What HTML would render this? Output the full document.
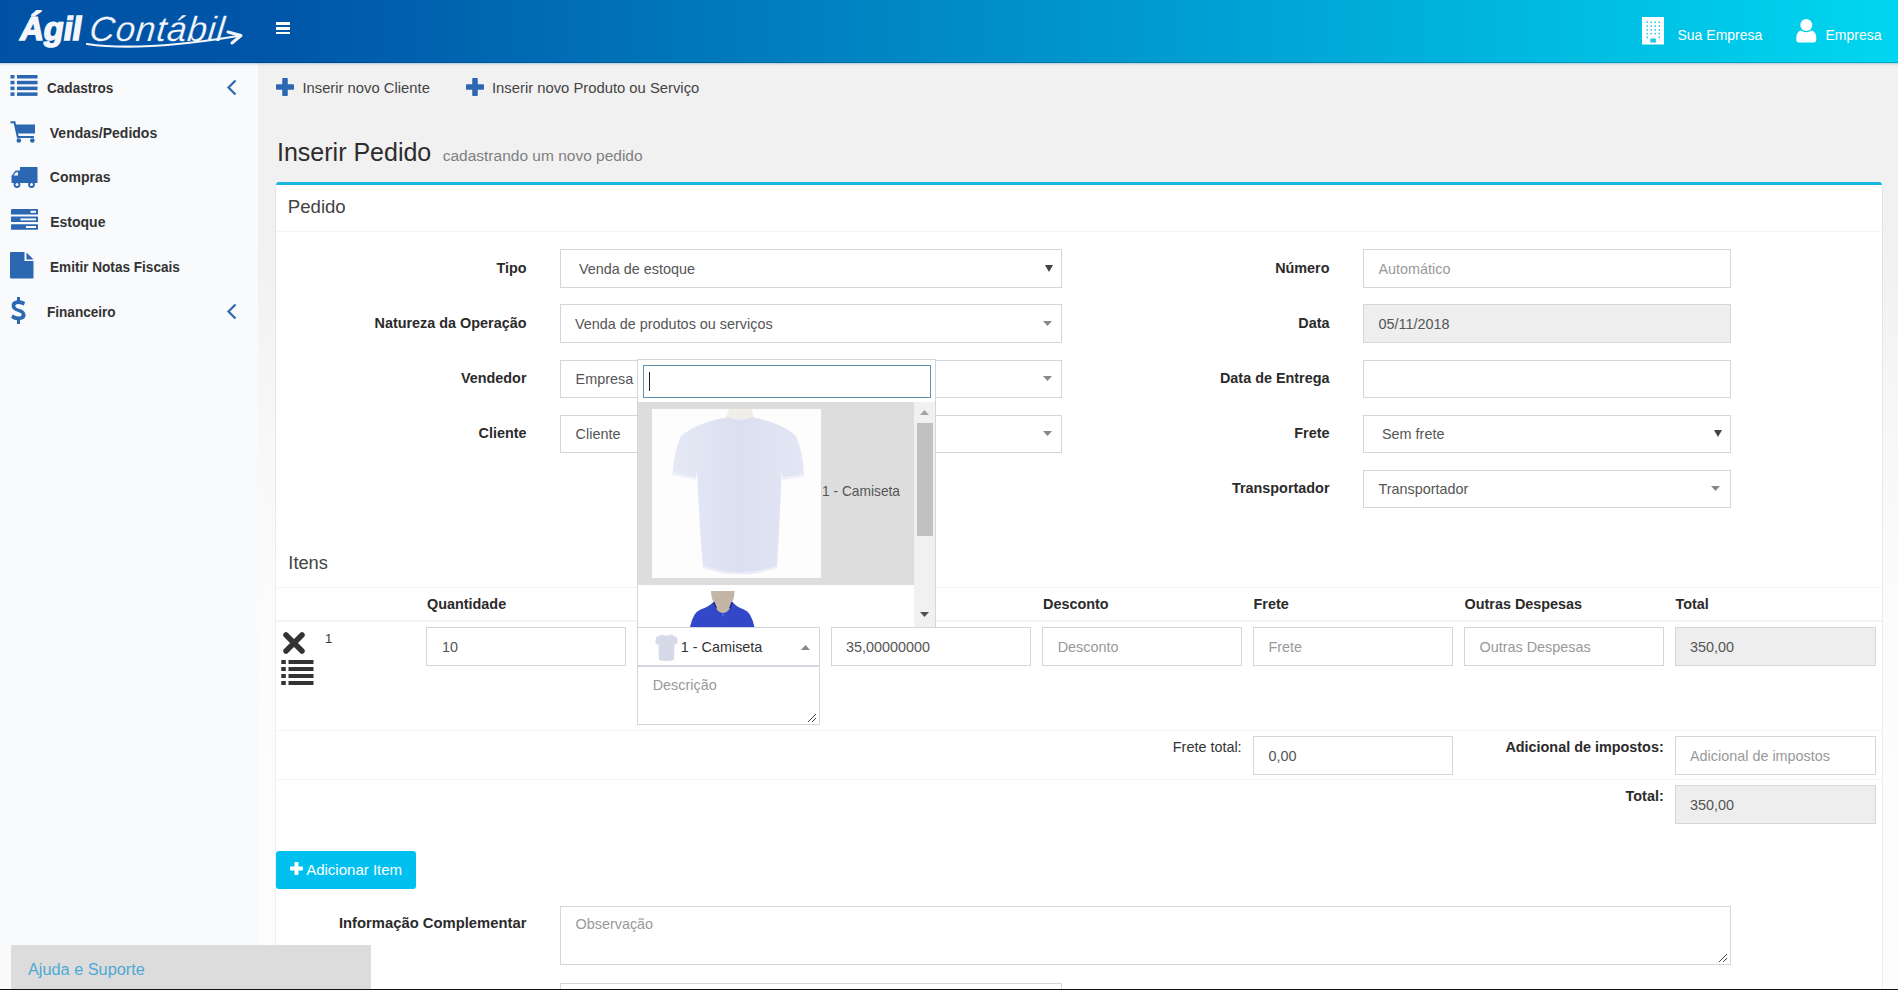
<!DOCTYPE html>
<html><head><meta charset="utf-8"><title>Inserir Pedido</title>
<style>
html,body{margin:0;padding:0;}
body{width:1898px;height:990px;overflow:hidden;position:relative;font-family:"Liberation Sans",sans-serif;background:#f1f1f1;}
.t{position:absolute;white-space:nowrap;line-height:1;}
.r{position:absolute;}
</style></head><body>
<div class="r" style="left:0px;top:0px;width:1898px;height:990px;background:linear-gradient(180deg,#f1f1f1 0px,#f1f1f1 240px,#f8f8f8 450px,#fcfcfc 650px,#fdfdfd 990px);"></div>
<div class="r" style="left:0px;top:62px;width:258px;height:928px;background:#f9fafc;"></div>
<div class="r" style="left:0px;top:0px;width:1898px;height:63px;background:linear-gradient(90deg,#0052a5 0%,#0055a8 14%,#00d6f0 100%);box-shadow:0 1px 3px rgba(0,0,0,.18);"></div>
<div class="r" style="left:0px;top:62px;width:1898px;height:1px;background:rgba(0,20,50,.22);"></div>
<div class="r" style="left:0px;top:63px;width:1898px;height:1px;background:rgba(170,215,240,.55);"></div>
<div class="t" style="top:15.40px;font-size:30px;color:#f4f6fb;font-weight:bold;left:17.5px;letter-spacing:-0.3px;-webkit-text-stroke:1.4px #f4f6fb;transform:skewX(-9deg) scale(1.1,1.1);transform-origin:left bottom;">&Aacute;gil</div>
<div class="t" style="top:10.86px;font-size:35px;color:#f4f6fb;left:88px;font-style:italic;letter-spacing:0.9px;transform:skewX(-6deg);transform-origin:left bottom;-webkit-text-stroke:0.2px #0052a5;">Cont&aacute;bil</div>
<svg class="r" style="left:80px;top:28px" width="170" height="22" viewBox="0 0 170 22">
<path d="M7 16 Q 60 24 158 8" stroke="#f4f6fb" stroke-width="2.2" fill="none" stroke-linecap="round"/>
<path d="M148 4 L161 7.5 L152 15" stroke="#f4f6fb" stroke-width="3" fill="none" stroke-linecap="round" stroke-linejoin="round"/>
</svg>
<div class="r" style="left:276px;top:22px;width:14px;height:3px;background:#fff;"></div>
<div class="r" style="left:276px;top:27px;width:14px;height:2.8000000000000007px;background:#fff;"></div>
<div class="r" style="left:276px;top:31.6px;width:14px;height:2.6000000000000014px;background:#fff;"></div>
<svg class="r" style="left:1642px;top:16.5px" width="22" height="28" viewBox="0 0 22 28">
<rect x="0" y="0" width="22" height="27.5" fill="#fff"/>
<g fill="#1ec6e8"><rect x="4.5" y="4.5" width="1.5" height="1.5"/><rect x="8.5" y="4.5" width="1.5" height="1.5"/><rect x="12.5" y="4.5" width="1.5" height="1.5"/><rect x="16.5" y="4.5" width="1.5" height="1.5"/><rect x="4.5" y="8.3" width="1.5" height="1.5"/><rect x="8.5" y="8.3" width="1.5" height="1.5"/><rect x="12.5" y="8.3" width="1.5" height="1.5"/><rect x="16.5" y="8.3" width="1.5" height="1.5"/><rect x="4.5" y="12.1" width="1.5" height="1.5"/><rect x="8.5" y="12.1" width="1.5" height="1.5"/><rect x="12.5" y="12.1" width="1.5" height="1.5"/><rect x="16.5" y="12.1" width="1.5" height="1.5"/><rect x="4.5" y="15.9" width="1.5" height="1.5"/><rect x="8.5" y="15.9" width="1.5" height="1.5"/><rect x="12.5" y="15.9" width="1.5" height="1.5"/><rect x="16.5" y="15.9" width="1.5" height="1.5"/><rect x="4.5" y="19.7" width="1.5" height="1.5"/><rect x="16.5" y="19.7" width="1.5" height="1.5"/><rect x="8.3" y="21.5" width="5.6" height="4"/></g></svg>
<div class="t" style="top:28.14px;font-size:14px;color:#fff;left:1677.5px;">Sua Empresa</div>
<svg class="r" style="left:1796px;top:18.5px" width="21" height="24" viewBox="0 0 21 24">
<circle cx="10.3" cy="6" r="6" fill="#fff"/>
<path d="M4.5 11.5 Q10.3 14.8 16 11.5 Q20.5 13.5 20.3 19 V20.5 Q20.3 23.5 17.5 23.5 H3 Q0.3 23.5 0.3 20.5 V19 Q0.1 13.5 4.5 11.5 Z" fill="#fff"/>
</svg>
<div class="t" style="top:28.14px;font-size:14px;color:#fff;left:1825.5px;">Empresa</div>
<svg class="r" style="left:10px;top:75px" width="28" height="21" viewBox="0 0 28 21">
<g fill="#2c67b1">
<rect x="0.5" y="0" width="4" height="3.5"/><rect x="7" y="0" width="20.5" height="3.5"/>
<rect x="0.5" y="5.8" width="4" height="3.5"/><rect x="7" y="5.8" width="20.5" height="3.5"/>
<rect x="0.5" y="11.6" width="4" height="3.5"/><rect x="7" y="11.6" width="20.5" height="3.5"/>
<rect x="0.5" y="17.4" width="4" height="3.5"/><rect x="7" y="17.4" width="20.5" height="3.5"/>
</g></svg>
<div class="t" style="top:80.84px;font-size:14px;color:#333;font-weight:bold;left:47px;transform:scaleX(0.97);transform-origin:left top;">Cadastros</div>
<svg class="r" style="left:226px;top:79px" width="12" height="17" viewBox="0 0 12 17">
<path d="M9.5 1.5 L2.5 8.5 L9.5 15.5" stroke="#2c67b1" stroke-width="2.2" fill="none"/></svg>
<svg class="r" style="left:10px;top:121px" width="27" height="23" viewBox="0 0 27 23">
<path d="M0.5 1.2 H4.5 L7.8 16 H24" stroke="#2c67b1" stroke-width="2" fill="none"/>
<path d="M5.5 3.5 H25 V12.5 H7.5 Z" fill="#2c67b1"/>
<circle cx="8.8" cy="19.5" r="2.3" fill="#2c67b1"/><circle cx="22.3" cy="19.5" r="2.3" fill="#2c67b1"/>
</svg>
<div class="t" style="top:126.14px;font-size:14px;color:#333;font-weight:bold;left:49.8px;">Vendas/Pedidos</div>
<svg class="r" style="left:11px;top:167px" width="27" height="21" viewBox="0 0 27 21">
<path d="M9 0 H26.5 V16 H9 Z" fill="#2c67b1"/>
<path d="M0.5 9 L4.5 3.5 H9 V16 H0.5 Z" fill="#2c67b1"/>
<path d="M2.5 8.5 L5 5.3 H7 V8.5 Z" fill="#f9fafc"/>
<circle cx="6" cy="17.5" r="3.4" fill="#2c67b1"/><circle cx="6" cy="17.5" r="1.5" fill="#f9fafc"/>
<circle cx="20.5" cy="17.5" r="3.4" fill="#2c67b1"/><circle cx="20.5" cy="17.5" r="1.5" fill="#f9fafc"/>
</svg>
<div class="t" style="top:170.34px;font-size:14px;color:#333;font-weight:bold;left:49.8px;">Compras</div>
<svg class="r" style="left:10.5px;top:209px" width="27" height="21" viewBox="0 0 27 21">
<g fill="#2c67b1"><rect x="0" y="0" width="27" height="5.5" rx="0.6"/><rect x="0" y="7.6" width="27" height="5.5" rx="0.6"/><rect x="0" y="15.2" width="27" height="5.5" rx="0.6"/></g>
<g fill="#f9fafc"><rect x="19.5" y="1.8" width="5.5" height="2"/><rect x="9.5" y="9.4" width="15.5" height="2"/><rect x="15" y="17" width="10" height="2"/></g>
</svg>
<div class="t" style="top:214.94px;font-size:14px;color:#333;font-weight:bold;left:50.2px;">Estoque</div>
<svg class="r" style="left:10px;top:252px" width="24" height="27" viewBox="0 0 24 27">
<path d="M1 0 H14.5 V9 H23.5 V25.5 Q23.5 26.5 22.5 26.5 H1 Q0 26.5 0 25.5 V1 Q0 0 1 0 Z" fill="#2c67b1"/>
<path d="M16.5 0.5 L23.5 7.5 H16.5 Z" fill="#2c67b1"/>
</svg>
<div class="t" style="top:260.14px;font-size:14px;color:#333;font-weight:bold;left:50.2px;transform:scaleX(0.97);transform-origin:left top;">Emitir Notas Fiscais</div>
<svg class="r" style="left:11px;top:297px" width="15" height="27" viewBox="0 0 15 27">
<path d="M6 0 H9 V3.2 Q12.5 3.8 14.2 5.2 L12.6 8.4 Q10.2 6.9 7.3 6.9 Q4.3 6.9 4.3 8.9 Q4.3 10.5 8 11.7 Q14.6 13.6 14.6 18.3 Q14.6 22.2 9 23.1 V27 H6 V23.2 Q2.2 22.8 0 20.7 L1.8 17.6 Q4.6 19.6 7.6 19.6 Q10.6 19.6 10.6 17.6 Q10.6 15.9 6.8 14.7 Q0.6 12.9 0.6 8.5 Q0.6 4.3 6 3.3 Z" fill="#2c67b1"/>
</svg>
<div class="t" style="top:304.74px;font-size:14px;color:#333;font-weight:bold;left:47.4px;transform:scaleX(0.97);transform-origin:left top;">Financeiro</div>
<svg class="r" style="left:226px;top:303px" width="12" height="17" viewBox="0 0 12 17">
<path d="M9.5 1.5 L2.5 8.5 L9.5 15.5" stroke="#2c67b1" stroke-width="2.2" fill="none"/></svg>
<svg class="r" style="left:276px;top:78px" width="18" height="18" viewBox="0 0 18 18"><path d="M6.25 0.8 Q6.25 0 7.05 0 H10.95 Q11.75 0 11.75 0.8 V6.25 H17.2 Q18 6.25 18 7.05 V10.95 Q18 11.75 17.2 11.75 H11.75 V17.2 Q11.75 18 10.95 18 H7.05 Q6.25 18 6.25 17.2 V11.75 H0.8 Q0 11.75 0 10.95 V7.05 Q0 6.25 0.8 6.25 H6.25 Z" fill="#2c67b1"/></svg>
<div class="t" style="top:81.17px;font-size:14.8px;color:#444;left:302.4px;">Inserir novo Cliente</div>
<svg class="r" style="left:465.5px;top:78px" width="18" height="18" viewBox="0 0 18 18"><path d="M6.25 0.8 Q6.25 0 7.05 0 H10.95 Q11.75 0 11.75 0.8 V6.25 H17.2 Q18 6.25 18 7.05 V10.95 Q18 11.75 17.2 11.75 H11.75 V17.2 Q11.75 18 10.95 18 H7.05 Q6.25 18 6.25 17.2 V11.75 H0.8 Q0 11.75 0 10.95 V7.05 Q0 6.25 0.8 6.25 H6.25 Z" fill="#2c67b1"/></svg>
<div class="t" style="top:81.17px;font-size:14.8px;color:#444;left:492px;">Inserir novo Produto ou Servi&ccedil;o</div>
<div class="t" style="top:140.03px;font-size:25px;color:#2d2d2d;left:277px;">Inserir Pedido</div>
<div class="t" style="top:148.07px;font-size:15.5px;color:#808080;left:442.7px;">cadastrando um novo pedido</div>
<div class="r" style="left:276px;top:182px;width:1606px;height:818px;background:#fff;border-top:3px solid #1ab4e0;border-radius:3px;box-sizing:border-box;box-shadow:0 1px 1px rgba(0,0,0,.08);"></div>
<div class="r" style="left:275px;top:186px;width:1px;height:804px;background:rgba(0,0,0,.05);"></div>
<div class="r" style="left:1882px;top:186px;width:1px;height:804px;background:rgba(0,0,0,.05);"></div>
<div class="t" style="top:198.15px;font-size:18.6px;color:#444;left:287.8px;">Pedido</div>
<div class="r" style="left:276px;top:231px;width:1606px;height:1px;background:#f4f4f4;"></div>
<div class="t" style="top:260.51px;font-size:14.4px;color:#2b2b2b;font-weight:bold;left:-73.5px;width:600px;text-align:right;">Tipo</div>
<div class="t" style="top:315.81px;font-size:14.4px;color:#2b2b2b;font-weight:bold;left:-73.5px;width:600px;text-align:right;">Natureza da Opera&ccedil;&atilde;o</div>
<div class="t" style="top:370.81px;font-size:14.4px;color:#2b2b2b;font-weight:bold;left:-73.5px;width:600px;text-align:right;">Vendedor</div>
<div class="t" style="top:426.31px;font-size:14.4px;color:#2b2b2b;font-weight:bold;left:-73.5px;width:600px;text-align:right;">Cliente</div>
<div class="r" style="left:560px;top:249px;width:502px;height:39px;background:#fff;border:1px solid #d2d6de;box-sizing:border-box;"></div>
<div class="r" style="left:560px;top:304px;width:502px;height:39px;background:#fff;border:1px solid #d2d6de;box-sizing:border-box;"></div>
<div class="r" style="left:560px;top:360px;width:502px;height:38px;background:#fff;border:1px solid #d2d6de;box-sizing:border-box;"></div>
<div class="r" style="left:560px;top:415px;width:502px;height:38px;background:#fff;border:1px solid #d2d6de;box-sizing:border-box;"></div>
<div class="t" style="top:261.51px;font-size:14.4px;color:#555;left:579px;">Venda de estoque</div>
<svg class="r" style="left:1045px;top:264.5px" width="8" height="7" viewBox="0 0 8 7"><path d="M0 0 H8 L4 7 Z" fill="#444"/></svg>
<div class="t" style="top:316.51px;font-size:14.4px;color:#555;left:575px;">Venda de produtos ou servi&ccedil;os</div>
<svg class="r" style="left:1043px;top:321.0px" width="9" height="5" viewBox="0 0 9 5"><path d="M0 0 H9 L4.5 5 Z" fill="#888"/></svg>
<div class="t" style="top:371.51px;font-size:14.4px;color:#555;left:575.6px;">Empresa 1</div>
<svg class="r" style="left:1043px;top:376.0px" width="9" height="5" viewBox="0 0 9 5"><path d="M0 0 H9 L4.5 5 Z" fill="#888"/></svg>
<div class="t" style="top:426.71px;font-size:14.4px;color:#555;left:575.6px;">Cliente</div>
<svg class="r" style="left:1043px;top:431.0px" width="9" height="5" viewBox="0 0 9 5"><path d="M0 0 H9 L4.5 5 Z" fill="#888"/></svg>
<div class="t" style="top:260.51px;font-size:14.4px;color:#2b2b2b;font-weight:bold;left:729.5px;width:600px;text-align:right;">N&uacute;mero</div>
<div class="t" style="top:315.81px;font-size:14.4px;color:#2b2b2b;font-weight:bold;left:729.5px;width:600px;text-align:right;">Data</div>
<div class="t" style="top:370.81px;font-size:14.4px;color:#2b2b2b;font-weight:bold;left:729.5px;width:600px;text-align:right;">Data de Entrega</div>
<div class="t" style="top:426.31px;font-size:14.4px;color:#2b2b2b;font-weight:bold;left:729.5px;width:600px;text-align:right;">Frete</div>
<div class="t" style="top:481.31px;font-size:14.4px;color:#2b2b2b;font-weight:bold;left:729.5px;width:600px;text-align:right;">Transportador</div>
<div class="r" style="left:1363px;top:249px;width:368px;height:39px;background:#fff;border:1px solid #d2d6de;box-sizing:border-box;"></div>
<div class="t" style="top:261.51px;font-size:14.4px;color:#999;left:1378.5px;">Autom&aacute;tico</div>
<div class="r" style="left:1363px;top:304px;width:368px;height:39px;background:#eee;border:1px solid #d2d6de;box-sizing:border-box;"></div>
<div class="t" style="top:316.51px;font-size:14.4px;color:#555;left:1378.5px;">05/11/2018</div>
<div class="r" style="left:1363px;top:360px;width:368px;height:38px;background:#fff;border:1px solid #d2d6de;box-sizing:border-box;"></div>
<div class="r" style="left:1363px;top:415px;width:368px;height:38px;background:#fff;border:1px solid #d2d6de;box-sizing:border-box;"></div>
<div class="t" style="top:426.71px;font-size:14.4px;color:#555;left:1382px;">Sem frete</div>
<svg class="r" style="left:1714px;top:430.0px" width="8" height="7" viewBox="0 0 8 7"><path d="M0 0 H8 L4 7 Z" fill="#444"/></svg>
<div class="r" style="left:1363px;top:470px;width:368px;height:38px;background:#fff;border:1px solid #d2d6de;box-sizing:border-box;"></div>
<div class="t" style="top:481.81px;font-size:14.4px;color:#555;left:1378.5px;">Transportador</div>
<svg class="r" style="left:1711px;top:486.0px" width="9" height="5" viewBox="0 0 9 5"><path d="M0 0 H9 L4.5 5 Z" fill="#888"/></svg>
<div class="t" style="top:554.40px;font-size:18.3px;color:#444;left:288.3px;">Itens</div>
<div class="r" style="left:276px;top:587px;width:1606px;height:1px;background:#f4f4f4;"></div>
<div class="t" style="top:596.91px;font-size:14.4px;color:#2b2b2b;font-weight:bold;left:427px;">Quantidade</div>
<div class="t" style="top:596.91px;font-size:14.4px;color:#2b2b2b;font-weight:bold;left:1043px;">Desconto</div>
<div class="t" style="top:596.91px;font-size:14.4px;color:#2b2b2b;font-weight:bold;left:1253.5px;">Frete</div>
<div class="t" style="top:596.91px;font-size:14.4px;color:#2b2b2b;font-weight:bold;left:1464.5px;">Outras Despesas</div>
<div class="t" style="top:596.91px;font-size:14.4px;color:#2b2b2b;font-weight:bold;left:1675.5px;">Total</div>
<div class="r" style="left:276px;top:620px;width:1606px;height:2px;background:#f4f4f4;"></div>
<svg class="r" style="left:282px;top:631px" width="24" height="24" viewBox="0 0 24 24">
<path d="M4 4 L20 20 M20 4 L4 20" stroke="#333" stroke-width="5.5" stroke-linecap="round"/></svg>
<svg class="r" style="left:281px;top:660px" width="33" height="26" viewBox="0 0 33 26">
<g fill="#333">
<rect x="0.3" y="0" width="4.5" height="4"/><rect x="7.5" y="0" width="25" height="4"/>
<rect x="0.3" y="7" width="4.5" height="4"/><rect x="7.5" y="7" width="25" height="4"/>
<rect x="0.3" y="14" width="4.5" height="4"/><rect x="7.5" y="14" width="25" height="4"/>
<rect x="0.3" y="21" width="4.5" height="4"/><rect x="7.5" y="21" width="25" height="4"/>
</g></svg>
<div class="t" style="top:631.99px;font-size:13px;color:#333;left:325px;">1</div>
<div class="r" style="left:426px;top:627px;width:200px;height:39px;background:#fff;border:1px solid #d2d6de;box-sizing:border-box;"></div>
<div class="t" style="top:639.61px;font-size:14.4px;color:#555;left:442px;">10</div>
<div class="r" style="left:637px;top:627px;width:183px;height:40px;background:#fff;border:1px solid #d2d6de;border-bottom:2px solid #d2d6de;box-sizing:border-box;"></div>
<svg class="r" style="left:655px;top:634px" width="23" height="28" viewBox="0 0 23 28">
<path d="M7 0.5 Q11.5 2.2 16 0.5 L21.5 3 Q23 5 22.3 10 L19.5 10.5 L19 26 Q11.5 28 4 26 L3.5 10.5 L0.7 10 Q0 5 1.5 3 Z" fill="#d5d9e8"/>
<path d="M7 0.5 Q11.5 3 16 0.5" stroke="#eef0f6" stroke-width="1" fill="none"/>
</svg>
<div class="t" style="top:639.51px;font-size:14.4px;color:#333;left:680.8px;">1 - Camiseta</div>
<svg class="r" style="left:801px;top:644.8px" width="9" height="5" viewBox="0 0 9 5"><path d="M0 5 H9 L4.5 0 Z" fill="#888"/></svg>
<div class="r" style="left:637px;top:666px;width:183px;height:59px;background:#fff;border:1px solid #d2d6de;box-sizing:border-box;"></div>
<div class="t" style="top:677.51px;font-size:14.4px;color:#999;left:652.7px;">Descri&ccedil;&atilde;o</div>
<svg class="r" style="left:807px;top:713px" width="10" height="10" viewBox="0 0 10 10">
<path d="M1 9 L9 1 M5 9 L9 5" stroke="#444" stroke-width="1"/></svg>
<div class="r" style="left:831px;top:627px;width:200px;height:39px;background:#fff;border:1px solid #d2d6de;box-sizing:border-box;"></div>
<div class="t" style="top:639.61px;font-size:14.4px;color:#555;left:846px;">35,00000000</div>
<div class="r" style="left:1042px;top:627px;width:200px;height:39px;background:#fff;border:1px solid #d2d6de;box-sizing:border-box;"></div>
<div class="t" style="top:639.91px;font-size:14.4px;color:#999;left:1057.7px;">Desconto</div>
<div class="r" style="left:1253px;top:627px;width:200px;height:39px;background:#fff;border:1px solid #d2d6de;box-sizing:border-box;"></div>
<div class="t" style="top:639.91px;font-size:14.4px;color:#999;left:1268.5px;">Frete</div>
<div class="r" style="left:1464px;top:627px;width:200px;height:39px;background:#fff;border:1px solid #d2d6de;box-sizing:border-box;"></div>
<div class="t" style="top:639.91px;font-size:14.4px;color:#999;left:1479.5px;">Outras Despesas</div>
<div class="r" style="left:1675px;top:627px;width:201px;height:39px;background:#eee;border:1px solid #d2d6de;box-sizing:border-box;"></div>
<div class="t" style="top:639.91px;font-size:14.4px;color:#555;left:1690px;">350,00</div>
<div class="r" style="left:276px;top:730px;width:1606px;height:1px;background:#f4f4f4;"></div>
<div class="t" style="top:739.81px;font-size:14.4px;color:#333;left:641.5999999999999px;width:600px;text-align:right;">Frete total:</div>
<div class="r" style="left:1253px;top:736px;width:200px;height:39px;background:#fff;border:1px solid #d2d6de;box-sizing:border-box;"></div>
<div class="t" style="top:748.71px;font-size:14.4px;color:#555;left:1268.5px;">0,00</div>
<div class="t" style="top:739.71px;font-size:14.4px;color:#2b2b2b;font-weight:bold;left:1063.7px;width:600px;text-align:right;">Adicional de impostos:</div>
<div class="r" style="left:1675px;top:736px;width:201px;height:39px;background:#fff;border:1px solid #d2d6de;box-sizing:border-box;"></div>
<div class="t" style="top:748.71px;font-size:14.4px;color:#999;left:1690px;">Adicional de impostos</div>
<div class="r" style="left:276px;top:779px;width:1606px;height:1px;background:#f4f4f4;"></div>
<div class="t" style="top:788.71px;font-size:14.4px;color:#2b2b2b;font-weight:bold;left:1063.7px;width:600px;text-align:right;">Total:</div>
<div class="r" style="left:1675px;top:785px;width:201px;height:39px;background:#eee;border:1px solid #d2d6de;box-sizing:border-box;"></div>
<div class="t" style="top:797.81px;font-size:14.4px;color:#555;left:1690px;">350,00</div>
<div class="r" style="left:276px;top:851px;width:140px;height:38px;background:#00c0ef;border-radius:3px;"></div>
<svg class="r" style="left:290px;top:862px" width="13" height="13" viewBox="0 0 13 13"><path d="M4.5 0.8 Q4.5 0 5.3 0 H7.7 Q8.5 0 8.5 0.8 V4.5 H12.2 Q13 4.5 13 5.3 V7.7 Q13 8.5 12.2 8.5 H8.5 V12.2 Q8.5 13 7.7 13 H5.3 Q4.5 13 4.5 12.2 V8.5 H0.8 Q0 8.5 0 7.7 V5.3 Q0 4.5 0.8 4.5 H4.5 Z" fill="#fff"/></svg>
<div class="t" style="top:862.10px;font-size:15px;color:#fff;left:306.2px;">Adicionar Item</div>
<div class="t" style="top:916.47px;font-size:14.8px;color:#2b2b2b;font-weight:bold;left:-73.60000000000002px;width:600px;text-align:right;">Informa&ccedil;&atilde;o Complementar</div>
<div class="r" style="left:560px;top:906px;width:1171px;height:59px;background:#fff;border:1px solid #d2d6de;box-sizing:border-box;"></div>
<div class="t" style="top:916.81px;font-size:14.4px;color:#999;left:575.5px;">Observa&ccedil;&atilde;o</div>
<svg class="r" style="left:1718px;top:953px" width="10" height="10" viewBox="0 0 10 10">
<path d="M1 9 L9 1 M5 9 L9 5" stroke="#444" stroke-width="1"/></svg>
<div class="r" style="left:560px;top:983px;width:502px;height:37px;background:#fff;border:1px solid #d2d6de;box-sizing:border-box;"></div>
<div class="r" style="left:637px;top:359px;width:299px;height:268px;background:#fff;border:1px solid #d2d6de;border-bottom:none;box-sizing:border-box;"></div>
<div class="r" style="left:643px;top:365px;width:288px;height:33px;background:#fff;border:1px solid #5e90a8;box-sizing:border-box;"></div>
<div class="r" style="left:649px;top:372px;width:1px;height:19px;background:#222;"></div>
<div class="r" style="left:638px;top:402px;width:276px;height:225px;background:#fff;overflow:hidden;"></div>
<div class="r" style="left:638px;top:402px;width:276px;height:182.5px;background:#dddddd;"></div>
<svg class="r" style="left:652px;top:409px" width="169" height="169" viewBox="0 0 169 169">
<defs>
<linearGradient id="sg" x1="0" y1="0" x2="1" y2="0">
<stop offset="0" stop-color="#e6e9f5"/><stop offset="0.5" stop-color="#dcdff0"/><stop offset="1" stop-color="#e3e6f4"/>
</linearGradient>
</defs>
<rect x="0" y="0" width="169" height="169" fill="#fdfdfe"/>
<path d="M77 0 H100 Q100 5 103 10 H73 Q76 5 77 0 Z" fill="#efeee9"/>
<path d="M75 8.5 Q46 13 29 27 Q22 42 20.5 65.5 L43.5 70.5 L45 62 Q47 110 51 158.5 Q88 172 125 158.5 Q128 110 129.5 62 L130.5 70.5 L152 67.5 Q151 42 144 27 Q128 13 101 8.5 Q88 12.5 75 8.5 Z" fill="url(#sg)"/>
<path d="M21 64.5 L43.5 69.5" stroke="#eef0f8" stroke-width="2.5" fill="none"/>
<path d="M151.5 66.5 L130.5 69.5" stroke="#eef0f8" stroke-width="2.5" fill="none"/>
<path d="M51.5 157.5 Q88 171 124.5 157.5" stroke="#eaedf7" stroke-width="2" fill="none"/>
</svg>
<div class="t" style="top:484.48px;font-size:14.2px;color:#555;left:822px;transform:scaleX(0.97);transform-origin:left top;">1 - Camiseta</div>
<svg class="r" style="left:652px;top:585px" width="169" height="42" viewBox="0 0 169 42">
<rect x="0" y="0" width="169" height="42" fill="#fff"/>
<path d="M59 6 H82.5 Q82.5 15 79 18 V26 Q75 30 71 30 Q67 30 63 26 V18 Q59 15 59 6 Z" fill="#c4b6a7"/>
<path d="M61.5 17 L64 23.5 Q67.5 28 71 28 Q74.5 28 78 23.5 L80.5 17 Q84 21.5 92 24.5 Q99.5 27.5 102.5 42 H38 Q41 27.5 48.5 24.5 Q57 21.5 61.5 17 Z" fill="#3248c9"/>
<path d="M61.8 17 L64.2 23.5 M80.2 17 L77.8 23.5" stroke="#1b2a7e" stroke-width="1.6"/>
<circle cx="71" cy="30" r="1.2" fill="#4a63d8"/>
</svg>
<div class="r" style="left:914px;top:402px;width:21px;height:225px;background:#f1f1f1;"></div>
<svg class="r" style="left:919.5px;top:410px" width="9" height="5" viewBox="0 0 9 5"><path d="M0 5 H9 L4.5 0 Z" fill="#a3a3a3"/></svg>
<div class="r" style="left:916.5px;top:423px;width:16.5px;height:113px;background:#c1c1c1;"></div>
<svg class="r" style="left:919.5px;top:612px" width="9" height="5" viewBox="0 0 9 5"><path d="M0 0 H9 L4.5 5 Z" fill="#505050"/></svg>
<div class="r" style="left:11px;top:945px;width:360px;height:45px;background:#dcdcdc;"></div>
<div class="t" style="top:961.20px;font-size:16.3px;color:#4eaad3;left:28px;">Ajuda e Suporte</div>
<div class="r" style="left:0px;top:989px;width:1898px;height:1px;background:#111;"></div>
</body></html>
